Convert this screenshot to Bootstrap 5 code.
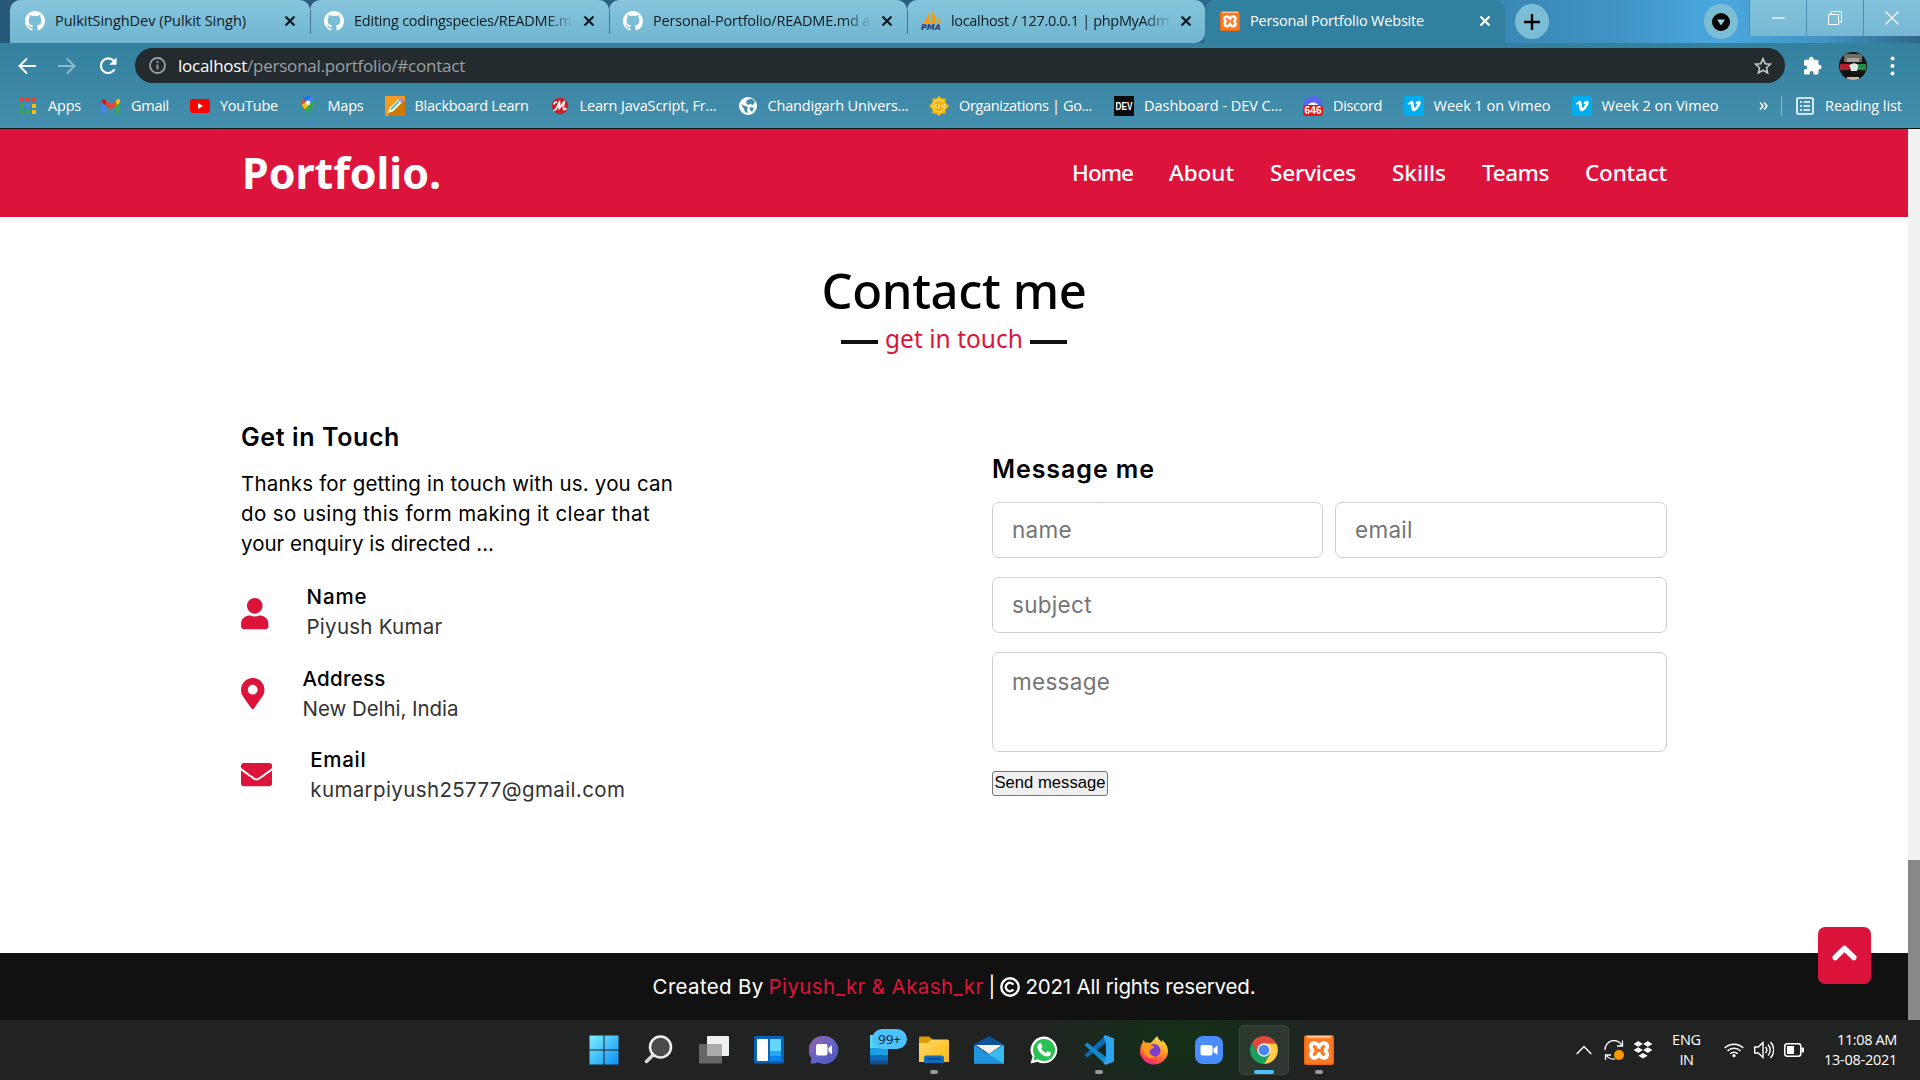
<!DOCTYPE html>
<html lang="en">
<head>
<meta charset="utf-8">
<title>Personal Portfolio Website</title>
<link href="https://cdn.jsdelivr.net/npm/bootstrap@5.3.0/dist/css/bootstrap.min.css" rel="stylesheet">
<style>
:root{--crimson:#dc143c;--ui:"Open Sans","Noto Sans",sans-serif;--head:"Noto Sans","Open Sans",sans-serif;--text:Inter,"Open Sans",sans-serif}
body{width:1920px;height:1080px;overflow:hidden;font-family:var(--text);color:#000;background:#fff}
svg{display:block;flex:none}
[data-w]{white-space:pre;flex:none;display:block}
/* browser frame */
.tabstrip{height:43px;background:linear-gradient(90deg,#27597a 0,#2a6285 60%,#3a88b6 78.5%,#3f93c4 84%,#4aa8de 89.5%,#4393c4 95%,#2f6888 100%);padding-left:10px;font:14.5px/20px var(--ui);color:#0b1c24}
.tab{position:relative;height:43px;padding:0 0 1px 15px;background:linear-gradient(#87c5dc,#70b5d1);border-radius:10px 10px 0 0}
.tab+.tab:not(.current)::before{content:"";position:absolute;left:0;top:10px;width:1px;height:24px;background:#3d7590}
.tab .label{margin-left:10px}
.tab .fade-end{-webkit-mask-image:linear-gradient(90deg,#000 88%,transparent 101%)}
.tab .close-x{margin-left:auto;margin-right:15px}
.current{background:linear-gradient(#3080a0,#3380a1);color:#fff}
.roundbtn{width:34px;height:35px;border-radius:50%;background:#7cbdd6}
.winbtn{width:57px;height:36px;background:linear-gradient(#83c2db,#76b8d3);border-left:1px solid #4a8fae}
.chrome-bars{height:86px;background:linear-gradient(#33809f,#448fad);border-bottom:1px solid #111;color:#fff;font-family:var(--ui)}
.navrow{height:45px;padding-left:17px}
.omnibox{width:1650px;height:35px;border-radius:18px;background:#242b2e;margin-left:17px;padding:0 13px 0 14px;font-size:17px;line-height:24px}
.omnibox .path{color:#9aa0a4}
.bookmarks{height:36px;padding-left:18px;gap:21px;font-size:14.5px;line-height:20px}
.bm{gap:10px}
.bm svg{width:20px;height:20px}
/* site */
.site{height:891px}
.track{width:12px;background:#f1f1f1}
.thumb{height:160px;background:#888}
.topnav{height:88px;background:var(--crimson);color:#fff;padding:0 241px 0 242px;font-family:var(--head)}
.logo{font-size:43px;font-weight:700;line-height:60px}
.links{gap:36px;font-size:22.5px;font-weight:500;line-height:30px;margin-bottom:1px}
.links a{color:#fff;text-decoration:none}
.contact{height:736px;padding-top:43px}
.headline{font:500 49px/60px var(--head)}
.sub{gap:7px;font:400 24.5px/30px var(--head);color:var(--crimson);margin-top:4px}
.rule{width:37px;height:4px;background:#111;margin-top:6px}
.col-info{width:751px;padding-top:65px}
.cap{font-size:25px;font-weight:600;line-height:36px}
.body-copy{font-size:20.5px;line-height:30px;margin-top:14px}
.fact{height:60px;gap:38px;font-size:20.5px;line-height:30px;color:#333}
.fact svg{fill:var(--crimson)}
.fact .key{color:#000;font-weight:500}
.col-form{width:675px;padding-top:97px}
.field{height:56px;border:1px solid #cfcfcf;border-radius:7px;padding:0 19px 2px;font-size:22.5px;line-height:34px;letter-spacing:.3px}
.field::placeholder{color:#757575}
textarea.field{height:100px;padding-top:12px;resize:none;display:block}
.send{width:116px;height:25px;border:1px solid #767676;border-radius:3px;background:#efefef;padding:0;font:16.6px/21px "Liberation Sans",sans-serif;color:#000;margin-top:19px}
.foot{height:67px;background:#111;color:#fff;font-size:20.5px;line-height:30px;gap:5px}
.foot a{color:var(--crimson);text-decoration:none}
.totop{position:absolute;left:1818px;top:927px;width:53px;height:57px;border-radius:7px;background:var(--crimson);padding:18px 14px}
/* desktop taskbar */
.taskbar{height:60px;background:radial-gradient(ellipse 150px 70px at 1180px 20px,#123016,transparent),#212222;padding:0 23px 0 576px;color:#fff;font-family:var(--ui)}
.slot{position:relative;width:55px;height:60px}
.slot svg{width:30px;height:30px}
.pip{position:absolute;left:23.5px;top:50px;width:8px;height:4px;border-radius:2px;background:#999}
.slot.on::before{content:"";position:absolute;left:2.5px;top:5px;width:50px;height:50px;border-radius:5px;background:#ffffff14;border:1px solid #ffffff12}
.slot.on svg{position:relative}
.slot.on .pip{left:17.5px;width:20px;background:#4cc2ff}
.count{position:absolute;left:21px;top:9px;width:35px;height:20px;border-radius:10px;background:#4cc2ff;color:#06202c;font-size:13.5px;line-height:20px;text-align:center}
.tray{font-size:14.5px;line-height:20px}
</style>
<script src="https://cdn.jsdelivr.net/npm/bootstrap@5.3.0/dist/js/bootstrap.bundle.min.js"></script>
</head>
<body class="d-flex flex-column">
<svg width="0" height="0" class="position-absolute">
<defs>
<linearGradient id="wg" x1="0" y1="0" x2="1" y2="1"><stop stop-color="#7cf0ff"/><stop offset="1" stop-color="#0a90f5"/></linearGradient>
<linearGradient id="chatg" x1="0" y1="0" x2="1" y2="1"><stop stop-color="#9a5fa8"/><stop offset=".55" stop-color="#6264c7"/><stop offset="1" stop-color="#4b53bc"/></linearGradient>
<linearGradient id="foldg" x1="0" y1="0" x2="1" y2="1"><stop stop-color="#ffdc6a"/><stop offset="1" stop-color="#fbb80f"/></linearGradient>
<linearGradient id="ffg" x1=".8" y1="0" x2=".3" y2="1"><stop stop-color="#fff14f"/><stop offset=".45" stop-color="#ff9a1f"/><stop offset=".8" stop-color="#ff4a4a"/><stop offset="1" stop-color="#e0218a"/></linearGradient>
<symbol id="gh" viewBox="0 0 16 16"><path fill="#fff" d="M8 0C3.58 0 0 3.58 0 8c0 3.54 2.29 6.53 5.47 7.59.4.07.55-.17.55-.38 0-.19-.01-.82-.01-1.49-2.01.37-2.53-.49-2.69-.94-.09-.23-.48-.94-.82-1.13-.28-.15-.68-.52-.01-.53.63-.01 1.08.58 1.23.82.72 1.21 1.87.87 2.33.66.07-.52.28-.87.51-1.07-1.78-.2-3.64-.89-3.64-3.95 0-.87.31-1.59.82-2.15-.08-.2-.36-1.02.08-2.12 0 0 .67-.21 2.2.82.64-.18 1.32-.27 2-.27s1.36.09 2 .27c1.53-1.04 2.2-.82 2.2-.82.44 1.1.16 1.92.08 2.12.51.56.82 1.27.82 2.15 0 3.07-1.87 3.75-3.65 3.95.29.25.54.73.54 1.48 0 1.07-.01 1.93-.01 2.2 0 .21.15.46.55.38A8.01 8.01 0 0 0 16 8c0-4.42-3.58-8-8-8z"/></symbol>
<symbol id="xx" viewBox="0 0 12 12"><path d="M1.500 1.500l9 9m0-9l-9 9" stroke="currentColor" stroke-width="2.200"/></symbol>
<symbol id="xampp" viewBox="0 0 30 30"><rect width="30" height="30" rx="2.500" fill="#e8690f"/><rect x="1.500" y="1.500" width="27" height="27" rx="1.500" fill="#fb7a24"/><path d="M3 1h24v2H3z" fill="#ffc48e"/><path d="M15 10.500c1.500 0 2-2.300 4.300-2.300 2.400 0 3.900 1.500 3.900 3.600 0 2-1.700 2.200-1.700 3.700s1.700 1.700 1.700 3.700c0 2.100-1.500 3.600-3.900 3.600-2.300 0-2.800-2.300-4.300-2.300s-2 2.300-4.300 2.300c-2.400 0-3.900-1.500-3.900-3.600 0-2 1.700-2.200 1.700-3.700s-1.700-1.700-1.700-3.700c0-2.100 1.500-3.600 3.900-3.600 2.300 0 2.800 2.300 4.300 2.300z" fill="none" stroke="#fff" stroke-width="3.800" stroke-linejoin="round"/><path d="M15 10v3.800M15 17.200V21" stroke="#fff" stroke-width="3.400"/></symbol>
<symbol id="vimeo" viewBox="0 0 20 20"><rect width="20" height="20" rx="2.500" fill="#00adef"/><path d="M3.500 7.700l3.300-2.600c2-.9 2.600.6 2.900 2.600.3 2 .6 4.300 1.200 4.300.7 0 2-2.300 2-3.400 0-.8-.7-1-1.500-.6.600-2.200 2-3.300 3.700-3.200 1.500.1 1.900 1.200 1.400 3.300-.6 2.600-4.600 7.300-6.600 7.300-1.700 0-2.200-1.900-2.700-4.200-.4-1.900-.6-3.400-1.200-3.400l-1.600 1z" fill="#fff"/></symbol>
</defs>
</svg>

<header>
<div class="tabstrip d-flex">
  <div class="tab d-flex align-items-center" style="width:300px"><svg width="20" height="20"><use href="#gh"/></svg><span class="label" data-w="191">PulkitSinghDev (Pulkit Singh)</span><svg class="close-x" style="margin-right:14px" width="12" height="12"><use href="#xx"/></svg></div>
  <div class="tab d-flex align-items-center" style="width:299px;padding-left:14px"><svg width="20" height="20"><use href="#gh"/></svg><span class="label fade-end" data-w="218">Editing codingspecies/README.m</span><svg class="close-x" style="margin-right:14px" width="12" height="12"><use href="#xx"/></svg></div>
  <div class="tab d-flex align-items-center" style="width:298px;padding-left:14px"><svg width="20" height="20"><use href="#gh"/></svg><span class="label fade-end" data-w="217">Personal-Portfolio/README.md a</span><svg class="close-x" style="margin-right:14px" width="12" height="12"><use href="#xx"/></svg></div>
  <div class="tab d-flex align-items-center" style="width:298px;padding-left:14px;border-bottom-right-radius:10px"><svg width="20" height="20" viewBox="0 0 20 20" overflow="visible"><path d="M2 12C5 9 7 5 7.500 1.500 9 5 8.500 9 8 12zM9 12c2-3 2.500-8 2-12 3 4 4.500 8 4 12zM16 12c1-2 1-4 .5-6 2 2 3 4 3 6z" fill="#f89c0e"/><text x="0" y="19.300" font-family="DejaVu Sans" font-size="7.800" font-weight="bold" font-style="italic" fill="#2b3a6b" textLength="20" lengthAdjust="spacingAndGlyphs">PMA</text></svg><span class="label fade-end" data-w="218">localhost / 127.0.0.1 | phpMyAdm</span><svg class="close-x" style="margin-right:13px" width="12" height="12"><use href="#xx"/></svg></div>
  <div class="tab current d-flex align-items-center" style="width:300px"><svg width="20" height="20"><use href="#xampp"/></svg><span class="label" data-w="174">Personal Portfolio Website</span><svg class="close-x" style="margin-right:14px" width="12" height="12"><use href="#xx"/></svg></div>
  <div class="roundbtn d-flex align-items-center justify-content-center" style="margin:4px 0 0 10px"><svg width="16" height="16"><path d="M8 0v16M0 8h16" stroke="#000" stroke-width="2.400"/></svg></div>
  <div class="roundbtn d-flex align-items-center justify-content-center" style="margin:4px 11px 0 auto"><svg width="18" height="18"><circle cx="9" cy="9" r="9"/><path d="M5 6.500h8l-4 6z" fill="#9bd0e4"/></svg></div>
  <div class="winbtn d-flex align-items-center justify-content-center"><svg width="13" height="2"><path d="M0 1h13" stroke="#fff" stroke-width="1.200"/></svg></div>
  <div class="winbtn d-flex align-items-center justify-content-center"><svg width="14" height="14" fill="none" stroke="#fff"><path d="M.5 3.500h10v10H.5zM3 3.500v-3h10.500V11H11"/></svg></div>
  <div class="winbtn d-flex align-items-center justify-content-center"><svg width="14" height="14" stroke="#fff" stroke-width="1.200"><path d="M.5.500l13 13m0-13l-13 13"/></svg></div>
</div>
<div class="chrome-bars">
  <div class="navrow d-flex align-items-center">
    <svg width="20" height="20" fill="none" stroke="#fff" stroke-width="2"><path d="M19 10H3M10 2.500L2.500 10l7.500 7.500"/></svg>
    <svg width="20" height="20" fill="none" stroke="#8cb9cc" stroke-width="2" style="margin-left:20px"><path d="M1 10h16M10 2.500l7.500 7.500-7.500 7.500"/></svg>
    <svg width="20" height="20" fill="none" stroke="#fff" stroke-width="2.200" style="margin-left:21px"><path d="M16.600 13.200A7.300 7.300 0 1 1 15.800 5"/><path d="M18.500 1.500v7.300h-7.300z" fill="#fff" stroke="none"/></svg>
    <div class="omnibox d-flex align-items-center"><svg width="17" height="17" fill="none" stroke="#9aa0a4" stroke-width="1.800"><circle cx="8.500" cy="8.500" r="7.500"/><path d="M8.500 7.500v5M8.500 4v2"/></svg><span data-w="69" style="margin-left:12px">localhost</span><span class="path" data-w="218">/personal.portfolio/#contact</span>
      <svg class="ms-auto" width="18" height="18" viewBox="0 0 18 18" fill="none" stroke="#c6c9cb" stroke-width="1.600"><path d="M9 1.800l2.200 4.900 5.200.5-3.900 3.500 1.100 5.200L9 13.200l-4.600 2.700 1.100-5.200L1.600 7.200l5.200-.5z"/></svg></div>
    <svg width="19" height="19" viewBox="0 0 19 19" fill="#fff" style="margin-left:18px"><path d="M6 3a2.300 2.300 0 0 1 4.600 0v.8H14a1.500 1.500 0 0 1 1.500 1.500v3.500h.8a2.300 2.300 0 0 1 0 4.600h-.8v3.600a1.500 1.500 0 0 1-1.500 1.500h-3.400V17a2 2 0 0 0-4 0v1.500H2.500A1.500 1.500 0 0 1 1 17v-3.600h1.200a2 2 0 0 0 0-4H1V5.300a1.500 1.500 0 0 1 1.500-1.500H6z"/></svg>
    <svg width="28" height="28" viewBox="0 0 28 28" style="margin-left:17px"><clipPath id="av"><circle cx="14" cy="14" r="14"/></clipPath><g clip-path="url(#av)"><path fill="#191512" d="M0 0h28v28H0z"/><path fill="#716b65" d="M5 2h18v8H5z"/><path fill="#a5a5a0" d="M8 6h12v4H8z"/><path fill="#b5202a" d="M1 12h9v6H1z"/><path fill="#e4e4e4" d="M10 13l5-2 5 2-2 6h-6z"/><path fill="#1f8e47" d="M19 12h8v6h-8z"/><path fill="#111" d="M4 20h20v4H4z"/><path fill="#c8b8a4" d="M8 25h12v3H8z"/></g></svg>
    <svg width="5" height="20" fill="#fff" style="margin-left:23px"><circle cx="2.500" cy="2.500" r="2"/><circle cx="2.500" cy="10" r="2"/><circle cx="2.500" cy="17.500" r="2"/></svg>
  </div>
  <div class="bookmarks d-flex align-items-center">
    <div class="bm d-flex align-items-center"><svg viewBox="0 0 20 20"><path fill="#ea4335" d="M2 2h4v4H2zM8 2h4v4H8zM14 2h4v4h-4z"/><path fill="#34a853" d="M2 8h4v4H2zM2 14h4v4H2z"/><path fill="#4285f4" d="M8 8h4v4H8z"/><path fill="#fbbc05" d="M14 8h4v4h-4zM14 14h4v4h-4z"/><path fill="#34a853" d="M8 14h4v4H8z"/></svg><span data-w="33">Apps</span></div>
    <div class="bm d-flex align-items-center" style="margin-left:-1px"><svg viewBox="0 0 20 20"><path fill="#4285f4" d="M1 6.500l4 3V17H2.500A1.500 1.500 0 0 1 1 15.500z"/><path fill="#34a853" d="M19 6.500l-4 3V17h2.500a1.500 1.500 0 0 0 1.500-1.500z"/><path fill="#ea4335" d="M5 4.500l5 4 5-4v5l-5 4-5-4z"/><path fill="#c5221f" d="M1 5C1 2.500 3.300 2.500 5 4.500v5l-4-3z"/><path fill="#fbbc04" d="M19 5c0-2.500-2.300-2.500-4-.5v5l4-3z"/></svg><span data-w="38">Gmail</span></div>
    <div class="bm d-flex align-items-center"><svg viewBox="0 0 20 20"><rect y="3" width="20" height="14" rx="3" fill="#f00"/><path fill="#fff" d="M8 7l5 3-5 3z"/></svg><span data-w="58">YouTube</span></div>
    <div class="bm d-flex align-items-center" style="margin-left:-1.500px"><svg viewBox="0 0 20 20"><path fill="#34a853" d="M16.500 7c0 5-5.500 7-6.500 13-.7-3-1.500-4.500-3-6.500L15.500 3c.7 1 1 2.500 1 4z"/><path fill="#fbbc04" d="M7 13.500C5.500 12 4.200 10 3.700 8.200L7.800 5.500 12 8z"/><path fill="#4285f4" d="M7.500 5.800L12.700.6c1.300.4 2.300 1.300 3 2.500L11.500 8z"/><path fill="#1a73e8" d="M5 3C7 .3 10-.5 12.700.6L8 6z"/><path fill="#ea4335" d="M5 2.900L8.200 5.600 3.700 8.700C3.300 6.500 3.700 4.500 5 2.900z"/><circle cx="10" cy="6.800" r="2.300" fill="#fff"/></svg><span data-w="36">Maps</span></div>
    <div class="bm d-flex align-items-center"><svg viewBox="0 0 20 20"><path fill="#f49a20" d="M0 0h20v20H0z"/><path fill="#cf7700" d="M17 3l3 3v14H4l-1-3z"/><path fill="#eafcf6" d="M3 17l1.500-5L14 2.500 17.500 6 8 15.500z"/><path stroke="#2bb5a0" stroke-width="1.500" d="M6 13.500L14 5"/><path fill="#b28be0" d="M13 3.500L15 1.500l3.500 3.500-2 2z"/></svg><span data-w="114">Blackboard Learn</span></div>
    <div class="bm d-flex align-items-center"><svg viewBox="0 0 20 20"><circle cx="10" cy="10" r="8.200" fill="#c8202b"/><path d="M3.500 14.500c3 .5 4.500-6 6-8.500.6 2-.6 4-.3 6.500 2-2 3-5 5-6.500-.5 3-1.500 5-.5 7.500 1.200.2 2-.5 2.800-1.300M4 8.500c0-2 2-2.700 3-2" stroke="#fff" stroke-width="1.700" fill="none"/></svg><span data-w="137">Learn JavaScript, Fr...</span></div>
    <div class="bm d-flex align-items-center"><svg viewBox="0 0 20 20"><circle cx="10" cy="10" r="9" fill="#fff"/><path fill="#438eac" d="M3 8l4 2 3 1-1 3 1 3-3-1-1-3zM9 4l5-1.500L17 6l-2 3-3-1-2 1-2-2zM12 11l4 1-2 4-2-2z"/></svg><span data-w="141">Chandigarh Univers...</span></div>
    <div class="bm d-flex align-items-center" style="margin-left:-.5px"><svg viewBox="0 0 20 20"><path fill="#fbbc04" d="M10 0l2.500 2.500L16.500 2.500v4L20 10l-3.500 3.500v4h-4L10 20l-2.500-2.500h-4v-4L0 10l3.500-3.500v-4h4z"/><circle cx="10" cy="10" r="5.800" fill="#f9ab00" stroke="#ffe08a"/><path d="M7.500 8L5.500 10l2 2M12.500 8l2 2-2 2M10.800 7.500l-1.600 5" stroke="#fff" fill="none"/></svg><span data-w="133">Organizations | Go...</span></div>
    <div class="bm d-flex align-items-center" style="margin-left:1px"><svg viewBox="0 0 20 20"><path fill="#0a0a0a" d="M0 0h20v20H0z"/><text x="1.500" y="14" font-family="Liberation Sans" font-size="11" font-weight="bold" fill="#fff" textLength="17" lengthAdjust="spacingAndGlyphs">DEV</text></svg><span data-w="138">Dashboard - DEV C...</span></div>
    <div class="bm d-flex align-items-center"><svg viewBox="0 0 20 20" overflow="visible"><circle cx="10" cy="9.500" r="9.500" fill="#5865f2"/><path d="M5 9c1-3.500 9-3.500 10 0z" fill="#fff"/><rect y="9" width="20" height="11" rx="3.500" fill="#e0161b"/><text x="1.500" y="18.300" font-family="Liberation Sans" font-size="10" font-weight="bold" fill="#fff" textLength="17">646</text></svg><span data-w="49">Discord</span></div>
    <div class="bm d-flex align-items-center" style="margin-left:.5px"><svg><use href="#vimeo"/></svg><span data-w="117">Week 1 on Vimeo</span></div>
    <div class="bm d-flex align-items-center"><svg><use href="#vimeo"/></svg><span data-w="117">Week 2 on Vimeo</span></div>
    <div class="d-flex align-items-center ms-auto" style="padding-right:18px"><svg width="9" height="10" fill="none" stroke="#fff" stroke-width="1.500"><path d="M1 1.500l3 3.500-3 3.500M5 1.500L8 5 5 8.500"/></svg><svg width="1" height="20" style="margin-left:13px"><path fill="#86b8ca" d="M0 0h1v20H0z"/></svg><svg width="18" height="18" fill="none" stroke="#fff" stroke-width="1.600" style="margin-left:14px"><rect x="1" y="1" width="16" height="16" rx="1"/><path d="M4 5h2M4 9h2M4 13h2M7.500 5H14M7.500 9H14M7.500 13H14"/></svg><span data-w="77" style="margin-left:11px">Reading list</span></div>
  </div>
</div>
</header>

<main class="site d-flex">
<div class="flex-grow-1">
  <nav class="topnav d-flex align-items-center justify-content-between">
    <span class="logo" data-w="199">Portfolio.</span>
    <div class="links d-flex"><a href="#" data-w="61">Home</a><a href="#" data-w="65">About</a><a href="#" data-w="86">Services</a><a href="#" data-w="54">Skills</a><a href="#" data-w="67">Teams</a><a href="#" data-w="82">Contact</a></div>
  </nav>
  <section class="contact">
    <div class="headline d-flex justify-content-center"><span data-w="265">Contact me</span></div>
    <div class="sub d-flex justify-content-center align-items-center"><span class="rule"></span><span data-w="138">get in touch</span><span class="rule"></span></div>
    <div class="d-flex" style="padding-left:241px">
      <div class="col-info">
        <div class="cap d-flex"><span data-w="159">Get in Touch</span></div>
        <div class="body-copy d-flex flex-column align-items-start"><span data-w="432">Thanks for getting in touch with us. you can</span><span data-w="409">do so using this form making it clear that</span><span data-w="253">your enquiry is directed ...</span></div>
        <div class="fact d-flex align-items-center" style="margin-top:23px"><svg class="mt-1" width="27.500" height="31.250" viewBox="0 0 448 512"><path d="M224 256c70.700 0 128-57.300 128-128S294.700 0 224 0 96 57.300 96 128s57.300 128 128 128zm89.600 32h-16.700c-22.200 10.200-46.900 16-72.900 16s-50.600-5.800-72.900-16h-16.700C60.200 288 0 348.200 0 422.400V464c0 26.500 21.500 48 48 48h352c26.500 0 48-21.500 48-48v-41.600c0-74.200-60.200-134.400-134.400-134.400z"/></svg><div><span class="key" data-w="61">Name</span><span data-w="136">Piyush Kumar</span></div></div>
        <div class="fact d-flex align-items-center" style="margin-top:22px"><svg width="23.500" height="31.250" viewBox="0 0 384 512"><path d="M172.268 501.670C26.970 291.031 0 269.413 0 192 0 85.961 85.961 0 192 0s192 85.961 192 192c0 77.413-26.970 99.031-172.268 309.670-9.535 13.774-29.930 13.773-39.464 0zM192 272c44.183 0 80-35.817 80-80s-35.817-80-80-80-80 35.817-80 80 35.817 80 80 80z"/></svg><div><span class="key" data-w="83">Address</span><span data-w="156">New Delhi, India</span></div></div>
        <div class="fact d-flex align-items-center" style="margin-top:21px"><svg width="31.250" height="31.250" viewBox="0 0 512 512"><path d="M502.300 190.800c3.900-3.100 9.700-.2 9.700 4.700V400c0 26.500-21.500 48-48 48H48c-26.500 0-48-21.500-48-48V195.600c0-5 5.700-7.800 9.700-4.700 22.400 17.400 52.100 39.500 154.100 113.600 21.100 15.400 56.700 47.800 92.200 47.600 35.700.3 72-32.800 92.300-47.600 102-74.100 131.600-96.300 154-113.700zM256 320c23.200.4 56.600-29.200 73.400-41.400 132.700-96.300 142.800-104.700 173.400-128.700 5.800-4.500 9.200-11.500 9.200-18.900v-19c0-26.500-21.500-48-48-48H48c-26.500 0-48 21.500-48 48v19c0 7.400 3.400 14.300 9.200 18.900 30.600 23.900 40.700 32.400 173.400 128.700 16.800 12.200 50.200 41.800 73.400 41.400z"/></svg><div><span class="key" data-w="56">Email</span><span data-w="315">kumarpiyush25777@gmail.com</span></div></div>
      </div>
      <form class="col-form">
        <div class="cap d-flex"><span data-w="163">Message me</span></div>
        <div class="d-flex" style="gap:12px;margin-top:15px"><input class="form-control field" style="width:331px" placeholder="name"><input class="form-control field" style="width:332px" placeholder="email"></div>
        <input class="form-control field" style="margin-top:19px" placeholder="subject">
        <textarea class="form-control field" style="margin-top:19px" placeholder="message"></textarea>
        <button type="button" class="send d-flex justify-content-center"><span data-w="111">Send message</span></button>
      </form>
    </div>
  </section>
  <footer class="foot d-flex align-items-center justify-content-center"><span data-w="111">Created By</span><a href="#" data-w="215">Piyush_kr &amp; Akash_kr</a><span>|</span><svg width="20" height="20" fill="none" stroke="#fff" stroke-width="2.400"><circle cx="10" cy="10" r="8.700"/><path d="M13.400 12.400a4.200 4.200 0 1 1 0-4.800"/></svg><span data-w="230">2021 All rights reserved.</span></footer>
</div>
<div class="track d-flex flex-column justify-content-end"><div class="thumb"></div></div>
</main>
<a class="totop" href="#"><svg width="25" height="16" fill="none" stroke="#fff" stroke-width="5.500" stroke-linecap="round" stroke-linejoin="round"><path d="M3.200 12.500l9.300-9 9.300 9"/></svg></a>

<footer class="taskbar d-flex align-items-center">
  <div class="slot d-flex align-items-center justify-content-center"><svg viewBox="0 0 30 30"><path fill="url(#wg)" d="M.5.500h14v14H.5zM15.500.500h14v14h-14zM.5 15.500h14v14H.5zM15.500 15.500h14v14h-14z"/></svg></div>
  <div class="slot d-flex align-items-center justify-content-center"><svg viewBox="0 0 30 30"><path d="M9 20l-6.500 6.500" stroke="#d5d8da" stroke-width="3.500" stroke-linecap="round"/><circle cx="16.500" cy="12" r="10.500" fill="#4a4a4a" stroke="#eceeef" stroke-width="2.500"/></svg></div>
  <div class="slot d-flex align-items-center justify-content-center"><svg viewBox="0 0 30 30"><rect x="8" y="1" width="22" height="20" rx="1" fill="#f0f0f0"/><rect y="9" width="23" height="19.500" rx="1" fill="#666"/><path d="M8 9h15v12H8z" fill="#aaa"/></svg></div>
  <div class="slot d-flex align-items-center justify-content-center"><svg viewBox="0 0 30 30"><rect y="1" width="30" height="27.500" rx="1.500" fill="#0b62b5"/><rect x="3" y="4" width="11" height="22" rx="1" fill="#fff"/><path fill="#63d5ff" d="M16 4h11v12H16z"/><path fill="#29a5f5" d="M16 16h11v5H16z"/><path fill="#0a84e8" d="M16 21h11v5H16z"/></svg></div>
  <div class="slot d-flex align-items-center justify-content-center"><svg viewBox="0 0 30 30"><path fill="url(#chatg)" d="M15 1a14 14 0 1 1-6 26.500c-3 1.500-6 1-8 .8 1-1.500 1.500-3 1.300-5.300A14 14 0 0 1 15 1z"/><rect x="7" y="9" width="11.500" height="11.500" rx="2" fill="#fff"/><path fill="#fff" d="M19.500 13l3.500-3v9.500l-3.500-3z"/></svg></div>
  <div class="slot d-flex align-items-center justify-content-center"><svg viewBox="0 0 30 30"><path fill="#58d8f5" d="M6 0h17v13H6z"/><path fill="#1d9de2" d="M6 13h18v7H6z"/><path fill="#0a6cbc" d="M6 20h18v6H6z"/><path fill="#174f86" d="M6 25.500h18v4H6z"/></svg><span class="count">99+</span></div>
  <div class="slot d-flex align-items-center justify-content-center"><svg viewBox="0 0 30 30"><path fill="#e09a05" d="M0 3a1.500 1.500 0 0 1 1.500-1.500H10L13 4v5H0z"/><path fill="url(#foldg)" d="M0 8h9l3-3.500h16.500A1.500 1.500 0 0 1 30 6v21H0z"/><path fill="#0f6cbd" d="M5 28v-5a2.500 2.500 0 0 1 2.500-2.500h15A2.500 2.500 0 0 1 25 23v5z"/><path stroke="#0a4a86" stroke-width="1.500" d="M8 24h14"/></svg><i class="pip"></i></div>
  <div class="slot d-flex align-items-center justify-content-center"><svg viewBox="0 0 30 30"><path fill="#0c539c" d="M0 9.500L15 1l15 8.500V15H0z"/><path fill="#f2f2f2" d="M2 10h26l-13 9z"/><path fill="#39c8f5" d="M30 10v18.500H0z"/><path fill="#1f93de" d="M0 10l15 9.500L30 28.500H0z"/><path fill="#38bcf0" d="M15 19l15-9v18.500z"/></svg></div>
  <div class="slot d-flex align-items-center justify-content-center"><svg viewBox="0 0 30 30"><path fill="#fff" d="M15 1.500A13.400 13.400 0 1 1 8.500 26.700L1.500 28.500l2-6.800A13.400 13.400 0 0 1 15 1.500z"/><circle cx="15" cy="15" r="11" fill="#29c054"/><path fill="#29c054" d="M4.500 25.500l1.500-7 5 5z"/><path fill="#fff" d="M9.500 9c1-1.500 2.500-1 3 .3l.8 2c.3.900-.8 1.600-1 2.100 1 2.100 2.500 3.500 4.700 4.400.7-.4 1.300-1.700 2-1.500l2.600 1.300c1 .5-.1 3-1.200 3.500-3 1.400-7-1-9-3.200-2.300-2.400-4.200-6.100-1.900-8.900z"/></svg></div>
  <div class="slot d-flex align-items-center justify-content-center"><svg viewBox="0 0 30 30"><path fill="#0a6cb8" d="M.5 20l2.500 2.500L22 8V0z"/><path fill="#1688d0" d="M.5 10L3 7.500 22 22v8z"/><path fill="#2ea3ee" d="M21.500 0L30 3.500v23L21.500 30l-2-1.500 2.500-6.500V8l-2.500-6.500z"/></svg><i class="pip"></i></div>
  <div class="slot d-flex align-items-center justify-content-center"><svg viewBox="0 0 30 30"><path fill="url(#ffg)" d="M1 16c0-4 1.500-6.500 2.500-8L4 5l3 3c2-.8 3-.5 4 0 2-.5 4-4.500 7.500-7 .2 3 2.500 4 4.500 6.500V5c4 3 6 7 6 11a14 13.500 0 0 1-28 0z"/><circle cx="15" cy="15.500" r="6.500" fill="#7b3fd0"/><path fill="#ff9a1f" d="M3.500 9c4-2 7-.5 8.500 1.500 2 0 3 .5 3 1.500s-3 1.500-4 3.500c-2 3 2 6 5.500 5.500-4 3-9 2-11-2S3 12 3.500 9z"/></svg></div>
  <div class="slot d-flex align-items-center justify-content-center"><svg viewBox="0 0 30 30"><rect x="1" y="1" width="28" height="28" rx="8" fill="#4a8cff"/><rect x="6.500" y="10" width="12" height="10.500" rx="2" fill="#fff"/><path fill="#fff" d="M19.500 13.500l4-3v9.500l-4-3z"/></svg></div>
  <div class="slot on d-flex align-items-center justify-content-center"><svg viewBox="0 0 30 30"><path fill="#dd4b3e" d="M15 15V1a14 14 0 0 1 12.300 7.500H15zM15 1A14 14 0 0 0 2.900 8L8.900 18.500 15 15z"/><path fill="#ffcd46" d="M27.300 8.500A14 14 0 0 1 15 29l6.100-10.500L15 8.500z"/><path fill="#19a15f" d="M2.900 8A14 14 0 0 0 15 29l6-10.500-6 3-6.100-3z"/><circle cx="15" cy="15" r="6.700" fill="#f1f1f1"/><circle cx="15" cy="15" r="5.300" fill="#4a86ee"/></svg><i class="pip"></i></div>
  <div class="slot d-flex align-items-center justify-content-center"><svg><use href="#xampp"/></svg><i class="pip"></i></div>
  <div class="tray d-flex align-items-center ms-auto">
    <svg width="16" height="10" fill="none" stroke="#fff" stroke-width="1.400"><path d="M.7 9L8 1.500 15.300 9"/></svg>
    <svg width="20" height="20" fill="none" stroke="#fff" stroke-width="1.300" style="margin-left:12px"><path d="M1 10a9 9 0 0 1 17-4.500M18.500.500v5.500H13M1.500 20v-5H7M2 15c2 3 5 4.300 9 4.200"/><circle cx="15" cy="15" r="5" fill="#ff9800" stroke="none"/></svg>
    <svg width="20" height="18" fill="#fff" style="margin-left:9px"><path d="M5.200 0l4.600 2.900-4.600 2.900L.6 2.900zM14.800 0l4.600 2.900-4.600 2.900-4.600-2.900zM5.200 6.200l4.600 2.900L5.200 12 .6 9.100zM14.800 6.200l4.600 2.900-4.600 2.900-4.600-2.900zM10 12l4.600 2.700L10 17.500l-4.600-2.800z"/></svg>
    <div class="d-flex flex-column align-items-center" style="margin-left:19px"><span data-w="29">ENG</span><span data-w="14">IN</span></div>
    <svg width="20" height="16" fill="none" stroke="#fff" stroke-width="1.500" style="margin-left:23px"><path d="M.7 6a13.200 13.200 0 0 1 18.600 0M3.500 9a9.200 9.200 0 0 1 13 0M6.300 11.700a5.300 5.300 0 0 1 7.400 0"/><circle cx="10" cy="13.700" r="1.600" fill="#fff" stroke="none"/></svg>
    <svg width="20" height="18" fill="none" stroke="#fff" stroke-width="1.400" style="margin-left:10px"><path d="M.7 6h3.500L9 1.500v15L4.200 12H.7zM11.500 6a4.500 4.500 0 0 1 0 6M14 3.500a8 8 0 0 1 0 11M16.500 1a11.500 11.500 0 0 1 0 16"/></svg>
    <svg width="20" height="14" fill="none" stroke="#fff" stroke-width="1.500" style="margin-left:10px"><rect x=".8" y=".8" width="16" height="12.400" rx="2.500"/><path fill="#fff" stroke="none" d="M3 3h7v8H3zM17.500 4.500H19a1 1 0 0 1 1 1v3a1 1 0 0 1-1 1h-1.500z"/></svg>
    <div class="d-flex flex-column align-items-end" style="margin-left:20px"><span data-w="60">11:08 AM</span><span data-w="73">13-08-2021</span></div>
  </div>
</footer>
<script>
// Track every label so that it fills the width given in data-w.
document.querySelectorAll('[data-w]').forEach(el => {
  const range = document.createRange();
  range.selectNodeContents(el);
  const want = +el.dataset.w, n = el.textContent.length;
  el.style.letterSpacing = (want - range.getBoundingClientRect().width) / n + 'px';
  el.style.width = want + 'px';
});
</script>
</body>
</html>
